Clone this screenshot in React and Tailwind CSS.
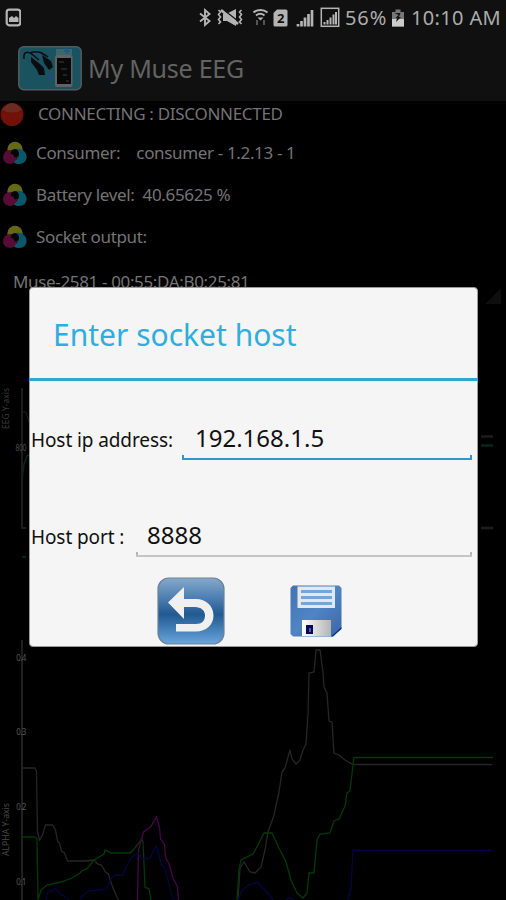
import React from 'react';

const StatusIcons = () => (
  <svg className="w-[144px] h-9 shrink-0" viewBox="197 0 144 36" fill="none" stroke="#b4b4b4">
    {/* bluetooth */}
    <path d="M200 13.500l9.500 7.500-4.500 4V10l4.500 4-9.500 7.500" strokeWidth="1.900" />
    {/* vibrate / mute */}
    <path d="M218.500 10l2 2-2 2.500 2 2.500-2 2.500 2 2.500-2 2M241.500 10l-2 2 2 2.500-2 2.500 2 2.500-2 2.500 2 2" strokeWidth="1.600" />
    <path d="M223 13.500h4l9-4.500v17l-9-5h-4z" fill="#b4b4b4" stroke="none" />
    <path d="M223 9.500l15 11.500" stroke="#111" strokeWidth="1.500" />
    <path d="M221 10l17 14" strokeWidth="2.600" />
    {/* wifi */}
    <path d="M253.500 12.500c4-3.500 10-3.500 14 0M256 15.500c2.500-2 6-2 8.500 0" strokeWidth="2" />
    <path d="M257.500 17.500h6l-3 3z" fill="#b4b4b4" stroke="none" />
    <path d="M257 20v5M264 20v5" stroke="#555" strokeWidth="2" />
    {/* sim */}
    <path d="M277 9.500h9q1.500 0 1.500 1.500v14q0 1.500-1.500 1.500h-11q-1.500 0-1.500-1.500V13z" fill="#b4b4b4" stroke="none" />
    <text x="280.600" y="23" textAnchor="middle" fill="#111" stroke="none" className="font-['Noto_Sans'] text-[13px] font-bold">2</text>
    {/* signal */}
    <path d="M298 24v2.500M301.500 21v5.500M305 17.500v9M308.500 14v12.500M312 10v16.500" strokeWidth="2.700" />
    <rect x="321.300" y="8.300" width="17.400" height="18" strokeWidth="1.500" />
    <path d="M324.500 22v2.500M327.500 20v4.500M330.500 17.500v7M333.500 14.500v10M336 12v12.500" strokeWidth="2" />
  </svg>
);

const StatusBar = () => (
  <div className="h-9 flex items-center text-[#acacac] text-[20px] leading-9 whitespace-nowrap">
    <svg className="ml-[5px] mr-[176px] w-4 h-9 shrink-0" viewBox="5 0 16 36">
      <rect x="6.700" y="9.700" width="13.600" height="15.600" rx="2.500" fill="none" stroke="#b4b4b4" strokeWidth="2.200" />
      <path d="M9 22v-4l3-2 2 2 2-2 2.500 2v4z" fill="#b4b4b4" />
    </svg>
    <StatusIcons />
    <span className="ml-[4px] w-[44px] tracking-[0.9px]">56%</span>
    <svg className="ml-[2px] w-[14px] h-9 shrink-0" viewBox="391 0 14 36">
      <path d="M392 12h3.500V9.500h5V12h3.500v14.500h-12z" fill="#777" />
      <path d="M392 19h12v7.500h-12z" fill="#ccc" />
      <path d="M394.500 13h6l-1.500 4 2 0-5 5 1-4h-1.500l3-3z" fill="#161616" />
    </svg>
    <span className="ml-[6px] tracking-[0.35px]">10:10 AM</span>
  </div>
);

const TitleBar = () => (
  <div className="h-[65px] flex items-center pl-[18px] text-[#636363]">
    <svg className="w-[64px] h-[45px] shrink-0" viewBox="0 0 64 45">
      <rect x="0.800" y="0.800" width="62.400" height="43" rx="5" fill="#1b5260" stroke="#515b5e" strokeWidth="1.500" />
      <path d="M6 13C5 5 10 5 15 9l6 5M12 7c8-3 12 0 18 4" fill="none" stroke="#0a0d10" strokeWidth="1.500" />
      <path d="M13 11l9 7 4 4 1 7h-6l-2-5-6-8zM24 9l9 6 2 6-4 3-5-7z" fill="#0a0d10" />
      <path d="M31 28h3v4h-3z" fill="#27468a" />
      <path d="M38 3h16v6H38z" fill="#3c656f" />
      <path d="M49 2v6M46 5h6" stroke="#1d5a85" strokeWidth="1.500" />
      <rect x="37" y="9" width="17.500" height="32" rx="2" fill="#626262" />
      <rect x="39" y="12" width="14" height="26" fill="#080808" />
      <path d="M41 16h5M43 23h6M45 29h4M48 35h3" stroke="#3c3c3c" strokeWidth="1.200" />
    </svg>
    <h1 className="ml-[6px] text-[25px] tracking-[-0.25px]">My Muse EEG</h1>
  </div>
);

const TriIcon = () => (
  <svg className="w-6 h-6 shrink-0" viewBox="0 0 24 24">
    <circle cx="12" cy="8.500" r="7.700" fill="#656917" />
    <circle cx="7" cy="16" r="7" fill="#560c36" />
    <path d="M13 8c5-1 10 2 10.500 7s-3 8-7.500 8-5-2-5-2c4-3 5-6 2-13z" fill="#0a566b" />
    <path d="M12 8c-3 0-5 3-4 5 2 0 3 1 3.500 3.500l4-1C17 12 15 8 12 8z" fill="#050505" />
  </svg>
);

const InfoRow = ({ children }) => (
  <div className="h-[42px] flex items-center pl-[3px] text-[17px]">
    <TriIcon />
    <p className="ml-[9px] whitespace-pre tracking-[-0.35px]">{children}</p>
  </div>
);

const Charts = () => (
  <svg className="block w-[506px] h-[600px] shrink-0" viewBox="0 300 506 600" fill="none">
    {/* EEG */}
    <path d="M22 388V528h4" stroke="#1d1d1d" strokeWidth="2" />
    <path d="M22 412h4l3 10" stroke="#1d1d1d" />
    <path d="M22 480l2-16 3-8 2-1" stroke="#06271b" strokeWidth="1.500" />
    <path d="M22 557h4" stroke="#06271b" strokeWidth="2" />
    <path d="M481 436.500h12M481 528h12" stroke="#1d1d1d" strokeWidth="2.500" />
    <path d="M481 445.500h12" stroke="#06271b" strokeWidth="2.500" />
    <text transform="translate(9 429) rotate(-90)" textLength="41" lengthAdjust="spacingAndGlyphs" fill="#3a3a3a" className="text-[8px]">EEG Y-axis</text>
    <text x="21" y="451" textAnchor="middle" textLength="11" lengthAdjust="spacingAndGlyphs" fill="#505050" className="text-[8px]">800</text>

    {/* ALPHA */}
    <path d="M22 640V900" stroke="#202020" strokeWidth="2" />
    <text transform="translate(9 856) rotate(-90)" textLength="53" lengthAdjust="spacingAndGlyphs" fill="#484848" className="text-[8px]">ALPHA Y-axis</text>
    <g fill="#585858" textAnchor="middle" className="text-[8px] tracking-[-0.6px]">
      <text x="21" y="661">0.4</text>
      <text x="21" y="735">0.3</text>
      <text x="21" y="810">0.2</text>
      <text x="21" y="885">0.1</text>
    </g>
    <g strokeWidth="1.300">
      <path d="M22 768h13l1.500 4 1 60 2 8 3-5 3-10h7l3 5 2 11 2 2 2 8 3 2 3 8h18l9-1 3 4 4 1 4 7 3 2 3 10 5 12 2 4" stroke="#262626" />
      <path d="M238 900L240 868 244 862 250 872 255 873 261 867 265 850 268 832 274 815 279 792 282 772 285 768 290 750 292 759 296 764 300 760 303 750 306 744 308 715 309 673 314 672 316 650 320 650 323 672 324 687 327 693 329 721 332 722 334 753 339 755 345 760 353 764.500H492" stroke="#262626" />
      <path d="M22 837h13l2 2 1 61 3-10 6-5 14-3 11-4 8-5 3-3 4-1 7-9 10-6 1-4 6 3h19l4-4 8-10 1 3 2 45 4 2 2 11" stroke="#003a05" />
      <path d="M237 900L239 870 241 860 253 854 258 845 264 833H272L279 848 286 862 291 880 297 893 303 898 307 893 309 873H314L317 840 320 834 330 833 334 821 339 819 345 806 347 793 350 791 353 765 354 757.500H493" stroke="#003a05" />
      <path d="M137.500 900l1-50 5-18 7-5 6-10 3 10 1 12 4 5 1 13 4 8 3 12 5 10 1 13" stroke="#48044c" />
      <path d="M46 900l2-9 4 0 3-3 5 6 9 5M80 899l8-8 19-2 4-11 5-3h7l4-10 5-8 6-4 4 6 8-1 6-12 3 8 2 10 4 4 3 13 4 15 2 4M238 900l4-10 8-6 8-1 7 7 8 10M286 900l4-3 4 3M348 900l3-12 2-37.500h139" stroke="#050540" />
    </g>
  </svg>
);

const BackIcon = () => (
  <svg className="w-[68px] h-[68px]" viewBox="0 0 68 68">
    <defs>
      <linearGradient id="back" x1="0" y1="0" x2="0" y2="1">
        <stop offset="0" stopColor="#86a9cb" />
        <stop offset="0.300" stopColor="#4d7fb2" />
        <stop offset="0.550" stopColor="#215991" />
        <stop offset="1" stopColor="#6aa5dd" />
      </linearGradient>
    </defs>
    <rect x="1" y="1" width="66" height="66" rx="11" fill="url(#back)" stroke="#6e8193" strokeWidth="1.200" />
    <path d="M11 25.500L27 10v12H39c10 0 17.500 7 17.500 16.500S49 54.500 39 54.500H19v-7.500h20c6 0 9-3.500 9-8.500S44 30 38 30H27v12z" fill="#f0f0f0" />
  </svg>
);

const SaveIcon = () => (
  <svg className="w-[52px] h-[52px]" viewBox="0 0 52 52">
    <defs>
      <linearGradient id="disk" x1="0" y1="0" x2="1" y2="1">
        <stop offset="0" stopColor="#4474b0" />
        <stop offset="0.500" stopColor="#5084c4" />
        <stop offset="1" stopColor="#3a67a8" />
      </linearGradient>
      <linearGradient id="shutter">
        <stop offset="0" stopColor="#ffffff" />
        <stop offset="1" stopColor="#b4b4b4" />
      </linearGradient>
    </defs>
    <path d="M3 .500h46l2.500 2.500v40L43 51.500H3L.500 49V3z" fill="url(#disk)" />
    <path d="M51.500 42v2L43 51.500h-2z" fill="#152b84" />
    <path d="M7.500 1.500H45V23H7.500z" fill="#e2e8ee" />
    <path d="M11 6.500h31M11 12.500h31M11 18.500h31" stroke="#78a5d8" strokeWidth="3" />
    <path d="M12 35h29v16H12z" fill="url(#shutter)" />
    <path d="M16 40h7v9h-7z" fill="#08085c" />
    <path d="M19 43h2v4h-2z" fill="#5a5a9a" />
  </svg>
);

const Field = ({ label, labelClass, value, boxClass, tickClass }) => (
  <div className="flex items-end pl-px pr-[5px] text-[#111]">
    <label className={`text-[19px] leading-6 pb-[8px] tracking-[-0.1px] whitespace-pre shrink-0 ${labelClass}`}>{label}</label>
    <div className={`relative flex-1 border-b-2 h-9 text-[24px] leading-[27px] ${boxClass}`}>
      {value}
      <i className={`absolute left-0 bottom-0 w-[2px] h-[3px] ${tickClass}`} />
      <i className={`absolute right-0 bottom-0 w-[2px] h-[3px] ${tickClass}`} />
    </div>
  </div>
);

const HostDialog = () => (
  <div className="absolute left-[29px] top-[287px] w-[449px] h-[360px] bg-[#f5f5f5] rounded-[4px] border border-[#9a9a9a] flex flex-col">
    <h2 className="h-[93px] -mx-px shrink-0 border-b-[3px] border-[#2ca8d6] pl-[24px] pt-[1px] text-[30px] leading-[92px] text-[#2faede]">
      Enter socket host
    </h2>
    <div className="pt-[43px]">
      <Field label="Host ip address:" labelClass="w-[151px]" value="192.168.1.5" boxClass="border-[#3694c6] pl-[13px]" tickClass="bg-[#3694c6]" />
    </div>
    <div className="pt-[61px]">
      <Field label="Host port :" labelClass="w-[105px]" value="8888" boxClass="border-[#c4c4c4] pl-[11px]" tickClass="bg-[#b4b4b4]" />
    </div>
    <div className="flex items-center pl-[127px] pt-[20px] gap-[65px]">
      <BackIcon />
      <SaveIcon />
    </div>
  </div>
);

const App = () => {
  return (
    <div className="relative w-[506px] h-[900px] overflow-hidden bg-black text-[#747474] font-['Noto_Sans',sans-serif] flex flex-col">
      <div className="bg-[#101010] shrink-0">
        <StatusBar />
        <TitleBar />
      </div>

      <div className="h-[199px] shrink-0">
        <div className="h-[31px] pb-[5px] flex items-center text-[17px]">
          <svg className="w-6 h-6 shrink-0" viewBox="0 0 24 24">
            <circle cx="12" cy="12.500" r="11.500" fill="#701208" />
            <path d="M2 8q10-14 20 0-10 5-20 0z" fill="#6c2a22" />
          </svg>
          <p className="ml-[14px] tracking-[-0.3px]">CONNECTING : DISCONNECTED</p>
        </div>
        <InfoRow>{'Consumer:    consumer - 1.2.13 - 1'}</InfoRow>
        <InfoRow>{'Battery level:  40.65625 %'}</InfoRow>
        <InfoRow>{'Socket output:'}</InfoRow>
        <div className="h-[42px] flex items-center justify-between pl-[13px] pr-[5px] text-[17px]">
          <p className="pt-[5px] tracking-[-0.35px]">Muse-2581 - 00:55:DA:B0:25:81</p>
          <svg className="w-4 h-4 mt-[34px]" viewBox="0 0 16 16">
            <path d="M16 0v16H0z" fill="#0e0e0e" />
          </svg>
        </div>
      </div>

      <Charts />
      <HostDialog />
    </div>
  );
};

export default App;
